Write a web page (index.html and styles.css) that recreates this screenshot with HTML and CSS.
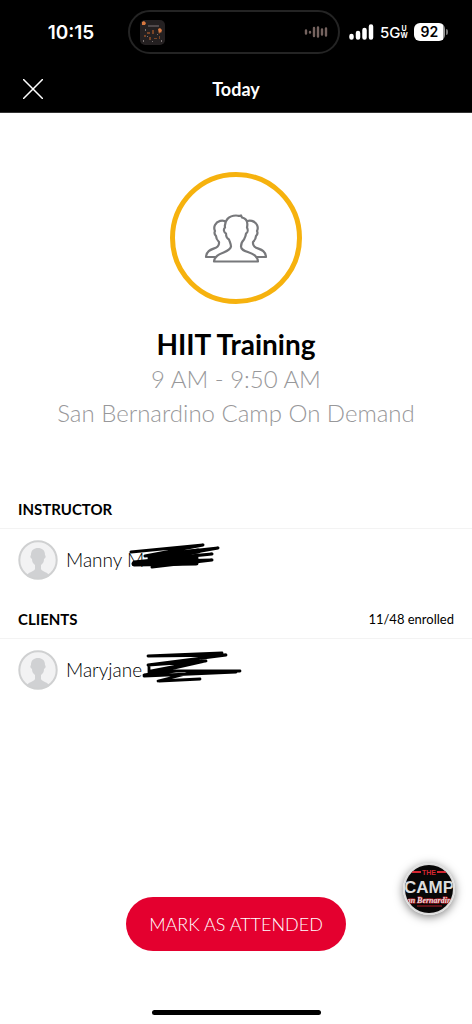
FILE: index.html
```html
<!DOCTYPE html>
<html lang="en">
<head>
<meta charset="utf-8">
<meta name="viewport" content="width=device-width, initial-scale=1">
<title>Today</title>
<link rel="stylesheet" href="styles.css">
</head>
<body>
<div class="screen">
  <header class="top">
    <div class="status">
      <span class="clock">10:15</span>
      <div class="island">
        <svg class="art" viewBox="0 0 25 25" aria-hidden="true">
          <rect width="25" height="25" rx="5" fill="#242021"/>
          <path d="M2 2l2-1 2 2-1 2H2zM18 9l2-1 2 2-1 3-1-1-1 2z" fill="#d9783f"/>
          <path d="M7 12h3v2H7zM12 10h2v4h-2zM4 15h2v2H4zM9 17h2v3H9zM14 18h3v1h-3zM19 16h1v3h-1z" fill="#784426"/>
          <path d="M8 5h11v2H8z" fill="#50494b"/>
          <path d="M3 20h1v2H3zM7 16h1v1H7zM12 21h1v1h-1zM17 14h1v1h-1zM21 20h1v2h-1zM5 9h1v2H5z" fill="#77706f"/>
        </svg>
        <svg class="wave" viewBox="0 0 24 12" aria-hidden="true">
          <path d="M2 4.500v3M6 6v.500M10 2v8M14 1.500v9M18 3.500v5M22 2.500v7" fill="none" stroke="#75635f" stroke-width="2.400" stroke-linecap="round"/>
        </svg>
      </div>
      <div class="indicators">
        <svg class="signal" viewBox="0 0 25 16" aria-hidden="true">
          <path d="M2.500 12v1.500M9 9v4.500M15.500 6v7.500M22 2.500v11" fill="none" stroke="#fff" stroke-width="4.500" stroke-linecap="round"/>
        </svg>
        <span class="network">5G<span class="band"><span>U</span><span>W</span></span></span>
        <span class="battery">92</span>
      </div>
    </div>
    <div class="nav">
      <button class="close" type="button" aria-label="Close">
        <svg viewBox="0 0 20 20" aria-hidden="true"><path d="M0 0l20 20M20 0L0 20" fill="none" stroke="#fff" stroke-width="1.500"/></svg>
      </button>
      <h1 class="nav-title">Today</h1>
    </div>
  </header>

  <main class="content">
    <section class="summary">
      <div class="ring">
        <svg class="people" viewBox="0 0 64 49" aria-hidden="true">
          <g fill="none" stroke="#77787b" stroke-width="2.200" stroke-linejoin="round">
            <path d="M22 8c-3-3-9-1-11 3-1 2-1 4 0 6-1 2 0 4 1 5 0 3 1 4 3 6 1 9-12 4-13 15h11"/>
            <path d="M42 8c3-3 9-1 11 3 1 2 1 4 0 6 1 2 0 4-1 5 0 3-1 4-3 6-1 9 12 4 13 15H51"/>
            <path fill="#fff" d="M10 47.500h44c-1-11-17-8-17-15 0-3 1-5 3-7 1-2 2-4 2-6 2-1 2-4 1-6 1-5 0-9-5-10l-1-2c-2 1-3 0-5 0-7 0-12 5-11 12-2 2-1 5 1 6 0 2 1 5 3 6 1 3 2 5 2 7-1 7-16 5-17 15z"/>
          </g>
        </svg>
      </div>
      <h2 class="class-name">HIIT Training</h2>
      <p class="detail">9 AM - 9:50 AM</p>
      <p class="detail">San Bernardino Camp On Demand</p>
    </section>

    <section class="group">
      <div class="group-head"><h3>INSTRUCTOR</h3></div>
      <div class="person">
        <svg class="avatar" viewBox="0 0 40 40" aria-hidden="true">
          <circle cx="20" cy="20" r="19" fill="#f2f2f3"/>
          <path d="M9 36c0-4 7-4 8-7v-4c-2-2-3-3-3-6-2-1-2-3-1-4 0-5 3-7 7-7s7 2 7 7c1 1 1 3-1 4 0 3-1 4-3 6v4c1 3 8 3 8 7-6 4-16 4-22 0z" fill="#d0d1d3"/>
          <circle cx="20" cy="20" r="18.700" fill="none" stroke="#cfd0d1" stroke-width="2"/>
        </svg>
        <span class="name">Manny M</span>
        <svg class="redaction" viewBox="0 0 94 27" aria-hidden="true">
          <path d="M3 9l72-7-58 11 73-8-62 11 56-5-78 8 78-2-60 7" fill="none" stroke="#000" stroke-width="3" stroke-linecap="round" stroke-linejoin="round"/>
          <path d="M10 21l58-6M22 15l48-7M6 21l62-1" fill="none" stroke="#000" stroke-width="5" stroke-linecap="round"/>
        </svg>
      </div>
    </section>

    <section class="group">
      <div class="group-head"><h3>CLIENTS</h3><span class="count">11/48 enrolled</span></div>
      <div class="person">
        <svg class="avatar" viewBox="0 0 40 40" aria-hidden="true">
          <circle cx="20" cy="20" r="19" fill="#f2f2f3"/>
          <path d="M9 36c0-4 7-4 8-7v-4c-2-2-3-3-3-6-2-1-2-3-1-4 0-5 3-7 7-7s7 2 7 7c1 1 1 3-1 4 0 3-1 4-3 6v4c1 3 8 3 8 7-6 4-16 4-22 0z" fill="#d0d1d3"/>
          <circle cx="20" cy="20" r="18.700" fill="none" stroke="#cfd0d1" stroke-width="2"/>
        </svg>
        <span class="name">Maryjane</span>
        <svg class="redaction redaction-wide" viewBox="0 0 100 32" aria-hidden="true">
          <path d="M6 5l74-3M6 5l78-1-78 10 58-4L2 24l32-4 64 0M2 25l92-4M7 14v8M8 20l52-10M16 30l40-10M17 30l41-2" fill="none" stroke="#000" stroke-width="2.800" stroke-linecap="round" stroke-linejoin="round"/>
        </svg>
      </div>
    </section>
  </main>

  <footer class="bottom">
    <button class="attend" type="button">MARK AS ATTENDED</button>
    <div class="home"></div>
  </footer>

  <button class="brand" type="button" aria-label="The Camp San Bernardino">
    <svg viewBox="0 0 52 52" aria-hidden="true">
      <defs><clipPath id="disc"><circle cx="26" cy="26" r="24"/></clipPath></defs>
      <circle cx="26" cy="26" r="26" fill="#dedede"/>
      <g clip-path="url(#disc)">
        <rect width="52" height="52" fill="#080707"/>
        <path d="M9 9h9M34 9h9" stroke="#d52631" stroke-width="2"/>
        <text class="logo-the" x="26" y="12" text-anchor="middle">THE</text>
        <text class="logo-camp" x="26" y="30" text-anchor="middle">CAMP</text>
        <text class="logo-city" x="26" y="40" text-anchor="middle">an Bernardin</text>
        <path d="M14 43h25" stroke="#b51f2a" stroke-width="1"/>
      </g>
    </svg>
  </button>
</div>
</body>
</html>
```
FILE: styles.css
```css
* { box-sizing: border-box; }
body { margin: 0; background: #fff; color: #000; font-family: Lato, "Open Sans", sans-serif; }
h1, h2, h3, p { margin: 0; }
button { border: 0; padding: 0; background: none; font: inherit; cursor: pointer; }
svg { display: block; }

.screen { position: relative; display: flex; flex-direction: column; min-height: 100vh; }

.top { background: #000; color: #fff; border-bottom: 1px solid #333; }
.status { display: grid; grid-template-columns: 1fr 212px 1fr; align-items: center; padding: 10px 4px 0 0; font-family: Inter, sans-serif; }
.clock { justify-self: center; padding-left: 14px; font-size: 19px; font-weight: 600; }
.island { display: flex; align-items: center; justify-content: space-between; height: 44px; padding: 0 10px; border: 2px solid #242424; border-radius: 22px; }
.art { width: 25px; height: 25px; }
.wave { width: 24px; height: 12px; }
.indicators { display: flex; align-items: center; gap: 6px; padding-left: 9px; }
.signal { width: 25px; height: 16px; }
.network { display: flex; align-items: center; font-size: 15px; font-weight: 500; }
.band { display: flex; flex-direction: column; font-size: 7px; line-height: 7px; font-weight: 700; text-align: center; }
.battery { position: relative; width: 31px; height: 18px; border-radius: 6px; background: linear-gradient(90deg, #fff 92%, #999 92%); color: #000; font-size: 14px; line-height: 18px; font-weight: 600; text-align: center; }
.battery::after { content: ""; position: absolute; left: 32px; top: 6px; width: 2px; height: 6px; border-radius: 0 2px 2px 0; background: #777; }

.nav { display: grid; grid-template-columns: 44px 1fr 44px; align-items: center; height: 58px; padding: 12px 11px 0; }
.close { display: grid; place-items: center; height: 44px; }
.close svg { width: 20px; height: 20px; }
.nav-title { font-size: 18px; line-height: 24px; font-weight: 700; text-align: center; }

.summary { display: flex; flex-direction: column; align-items: center; padding: 59px 16px; text-align: center; }
.ring { display: grid; place-items: center; width: 132px; height: 132px; margin-bottom: 22px; border: 5px solid #f6b20e; border-radius: 50%; }
.people { width: 64px; height: 49px; }
.class-name { font-size: 28px; line-height: 36px; font-weight: 700; }
.detail { color: #98989a; font-size: 24px; line-height: 34px; font-weight: 300; }

.group-head { display: flex; align-items: center; justify-content: space-between; height: 40px; padding: 0 18px; border-bottom: 1px solid #f3f3f3; }
.group-head h3 { font-size: 15px; line-height: 20px; font-weight: 700; }
.count { font-size: 13px; line-height: 20px; }
.person { display: flex; align-items: center; height: 70px; padding: 0 18px 8px; }
.avatar { width: 40px; height: 40px; }
.name { padding-left: 8px; font-size: 19px; line-height: 24px; font-weight: 300; }
.redaction { width: 94px; height: 27px; margin: 0 0 8px -16px; }
.redaction-wide { width: 100px; height: 32px; margin: 0 0 6px; }

.bottom { display: flex; flex-direction: column; align-items: center; margin-top: auto; padding-bottom: 9px; }
.attend { padding: 15px 23px; border-radius: 27px; background: #e4002f; color: #fff; font-size: 18px; line-height: 24px; font-weight: 300; }
.home { width: 169px; height: 5px; margin-top: 59px; border-radius: 3px; background: #000; }

.brand { position: absolute; right: 17px; bottom: 109px; width: 52px; height: 52px; border-radius: 50%; box-shadow: 0 2px 10px rgba(0, 0, 0, .5); }
.brand svg { width: 52px; height: 52px; }
.logo-the { fill: #d52631; font: 700 7px "Liberation Sans", sans-serif; }
.logo-camp { fill: #ddd; font: 700 17px "Liberation Sans", sans-serif; }
.logo-city { fill: #ddd; stroke: #c2222d; stroke-width: 1px; paint-order: stroke; font: italic 700 8px "Liberation Serif", serif; }
```
